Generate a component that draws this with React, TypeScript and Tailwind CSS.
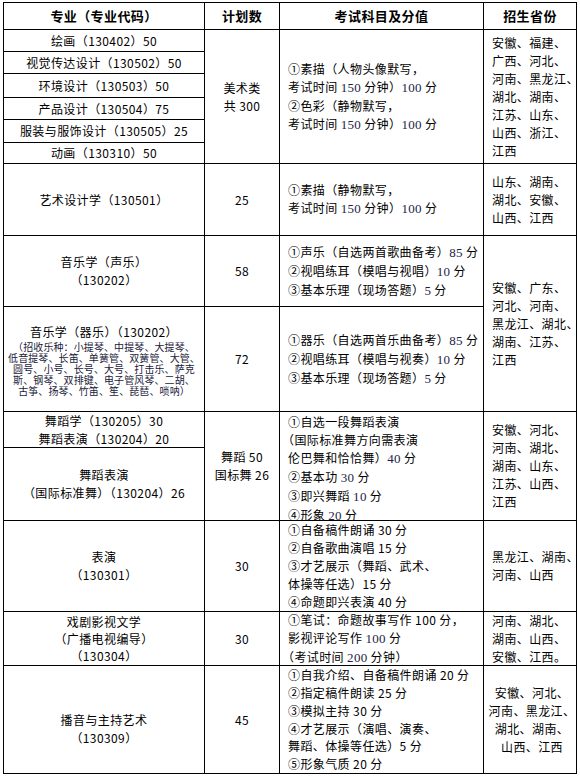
import React from "react";

const N = ({ children }: { children: React.ReactNode }) => (
  <span className="font-['Liberation_Serif','Noto_Sans_CJK_SC',serif] text-[13px] tracking-[0.3px] text-[#1d1d45]">{children}</span>
);

const Cell = ({ className, children }: { className: string; children?: React.ReactNode }) => (
  <div className={"bg-white flex flex-col justify-center whitespace-nowrap overflow-visible " + className}>{children}</div>
);

const L = ({ children, className = "" }: { children: React.ReactNode; className?: string }) => (
  <div className={className}>{children}</div>
);

export default function App() {
  return (
    <div className="min-h-[776px] w-[580px] bg-white pt-[2px] pl-[3px] font-['Noto_Sans_CJK_SC','Noto_Sans',sans-serif] text-[12px] leading-[18px] tracking-[0.4px] text-black">
      <div className="grid w-fit grid-cols-[200px_74px_203px_92px] grid-rows-[26px_21px_21px_23px_21px_22px_20px_71px_70px_104px_35px_72px_90px_53px_107px] gap-px bg-black p-px">
        {/* header */}
        <Cell className="col-start-1 row-start-1 items-center text-[13px] font-bold">专业（专业代码）</Cell>
        <Cell className="col-start-2 row-start-1 items-center text-[13px] font-bold">计划数</Cell>
        <Cell className="col-start-3 row-start-1 items-center text-[13px] font-bold">考试科目及分值</Cell>
        <Cell className="col-start-4 row-start-1 items-center text-[13px] font-bold">招生省份</Cell>

        {/* art group */}
        <Cell className="col-start-1 row-start-2 items-center">绘画（130402）50</Cell>
        <Cell className="col-start-1 row-start-3 items-center">视觉传达设计（130502）50</Cell>
        <Cell className="col-start-1 row-start-4 items-center">环境设计（130503）50</Cell>
        <Cell className="col-start-1 row-start-5 items-center">产品设计（130504）75</Cell>
        <Cell className="col-start-1 row-start-6 items-center">服装与服饰设计（130505）25</Cell>
        <Cell className="col-start-1 row-start-7 items-center">动画（130310）50</Cell>
        <Cell className="col-start-2 row-start-2 row-span-6 items-center">
          <L>美术类</L>
          <L>共 300</L>
        </Cell>
        <Cell className="col-start-3 row-start-2 row-span-6 pl-[8px]">
          <L>①素描（人物头像默写，</L>
          <L>考试时间 <N>150</N> 分钟）<N>100</N> 分</L>
          <L>②色彩（静物默写，</L>
          <L>考试时间 <N>150</N> 分钟）<N>100</N> 分</L>
        </Cell>
        <Cell className="col-start-4 row-start-2 row-span-6 pl-[8px]">
          <L>安徽、福建、</L>
          <L>广西、河北、</L>
          <L>河南、黑龙江、</L>
          <L>湖北、湖南、</L>
          <L>江苏、山东、</L>
          <L>山西、浙江、</L>
          <L>江西</L>
        </Cell>

        {/* 艺术设计学 */}
        <Cell className="col-start-1 row-start-8 items-center">艺术设计学（130501）</Cell>
        <Cell className="col-start-2 row-start-8 items-center">25</Cell>
        <Cell className="col-start-3 row-start-8 pl-[8px]">
          <L>①素描（静物默写，</L>
          <L>考试时间 <N>150</N> 分钟）<N>100</N> 分</L>
        </Cell>
        <Cell className="col-start-4 row-start-8 pl-[8px]">
          <L>山东、湖南、</L>
          <L>湖北、安徽、</L>
          <L>山西、江西</L>
        </Cell>

        {/* 声乐 */}
        <Cell className="col-start-1 row-start-9 items-center">
          <L>音乐学（声乐）</L>
          <L>（130202）</L>
        </Cell>
        <Cell className="col-start-2 row-start-9 items-center">58</Cell>
        <Cell className="col-start-3 row-start-9 pl-[8px]">
          <L>①声乐（自选两首歌曲备考）<N>85</N> 分</L>
          <L>②视唱练耳（模唱与视唱）<N>10</N> 分</L>
          <L>③基本乐理（现场答题）<N>5</N> 分</L>
        </Cell>
        <Cell className="col-start-4 row-start-9 row-span-2 pl-[8px]">
          <L>安徽、广东、</L>
          <L>河北、河南、</L>
          <L>黑龙江、湖北、</L>
          <L>湖南、江苏、</L>
          <L>江西</L>
        </Cell>

        {/* 器乐 */}
        <Cell className="col-start-1 row-start-10 items-center">
          <L>音乐学（器乐）（130202）</L>
          <div className="text-center text-[10px] leading-[11px] tracking-[0.1px] text-[#1a1a3a]">
            <L>（招收乐种：小提琴、中提琴、大提琴、</L>
            <L>低音提琴、长笛、单簧管、双簧管、大管、</L>
            <L>圆号、小号、长号、大号、打击乐、萨克</L>
            <L>斯、钢琴、双排键、电子管风琴、二胡、</L>
            <L>古筝、扬琴、竹笛、笙、琵琶、唢呐）</L>
          </div>
        </Cell>
        <Cell className="col-start-2 row-start-10 items-center">72</Cell>
        <Cell className="col-start-3 row-start-10 pl-[8px]">
          <L>①器乐（自选两首乐曲备考）<N>85</N> 分</L>
          <L>②视唱练耳（模唱与视奏）<N>10</N> 分</L>
          <L>③基本乐理（现场答题）<N>5</N> 分</L>
        </Cell>

        {/* 舞蹈 */}
        <Cell className="col-start-1 row-start-11 items-center">
          <L>舞蹈学（130205）30</L>
          <L>舞蹈表演（130204）20</L>
        </Cell>
        <Cell className="col-start-1 row-start-12 items-center">
          <L>舞蹈表演</L>
          <L>（国际标准舞）（130204）26</L>
        </Cell>
        <Cell className="col-start-2 row-start-11 row-span-2 items-center">
          <L>舞蹈 50</L>
          <L>国标舞 26</L>
        </Cell>
        <Cell className="col-start-3 row-start-11 row-span-2 pl-[8px] pt-[6px]">
          <L>①自选一段舞蹈表演</L>
          <L className="-ml-[6px]">（国际标准舞方向需表演</L>
          <L>伦巴舞和恰恰舞）<N>40</N> 分</L>
          <L>②基本功 <N>30</N> 分</L>
          <L>③即兴舞蹈 <N>10</N> 分</L>
          <L>④形象 <N>20</N> 分</L>
        </Cell>
        <Cell className="col-start-4 row-start-11 row-span-2 pl-[8px]">
          <L>安徽、河北、</L>
          <L>河南、湖北、</L>
          <L>湖南、山东、</L>
          <L>江苏、山西、</L>
          <L>江西</L>
        </Cell>

        {/* 表演 */}
        <Cell className="col-start-1 row-start-13 items-center">
          <L>表演</L>
          <L>（130301）</L>
        </Cell>
        <Cell className="col-start-2 row-start-13 items-center">30</Cell>
        <Cell className="col-start-3 row-start-13 pl-[8px]">
          <L>①自备稿件朗诵 30 分</L>
          <L>②自备歌曲演唱 15 分</L>
          <L>③才艺展示（舞蹈、武术、</L>
          <L>体操等任选）15 分</L>
          <L>④命题即兴表演 40 分</L>
        </Cell>
        <Cell className="col-start-4 row-start-13 pl-[8px]">
          <L>黑龙江、湖南、</L>
          <L>河南、山西</L>
        </Cell>

        {/* 戏剧影视文学 */}
        <Cell className="col-start-1 row-start-14 items-center leading-[17px]">
          <L>戏剧影视文学</L>
          <L>（广播电视编导）</L>
          <L>（130304）</L>
        </Cell>
        <Cell className="col-start-2 row-start-14 items-center">30</Cell>
        <Cell className="col-start-3 row-start-14 pl-[8px]">
          <L>①笔试：命题故事写作 100 分，</L>
          <L>影视评论写作 <N>100</N> 分</L>
          <L className="-ml-[6px]">（考试时间 <N>200</N> 分钟）</L>
        </Cell>
        <Cell className="col-start-4 row-start-14 pl-[8px]">
          <L>河南、湖北、</L>
          <L>湖南、山西、</L>
          <L>安徽、江西。</L>
        </Cell>

        {/* 播音与主持艺术 */}
        <Cell className="col-start-1 row-start-15 items-center pt-[18px]">
          <L>播音与主持艺术</L>
          <L>（130309）</L>
        </Cell>
        <Cell className="col-start-2 row-start-15 items-center">45</Cell>
        <Cell className="col-start-3 row-start-15 pl-[8px] leading-[17.7px]">
          <L>①自我介绍、自备稿件朗诵 20 分</L>
          <L>②指定稿件朗读 25 分</L>
          <L>③模拟主持 30 分</L>
          <L>④才艺展示（演唱、演奏、</L>
          <L>舞蹈、体操等任选）5 分</L>
          <L>⑤形象气质 20 分</L>
        </Cell>
        <Cell className="col-start-4 row-start-15 items-center pl-[4px]">
          <L>安徽、河北、</L>
          <L>河南、黑龙江、</L>
          <L>湖北、湖南、</L>
          <L>山西、江西</L>
        </Cell>
      </div>
    </div>
  );
}
